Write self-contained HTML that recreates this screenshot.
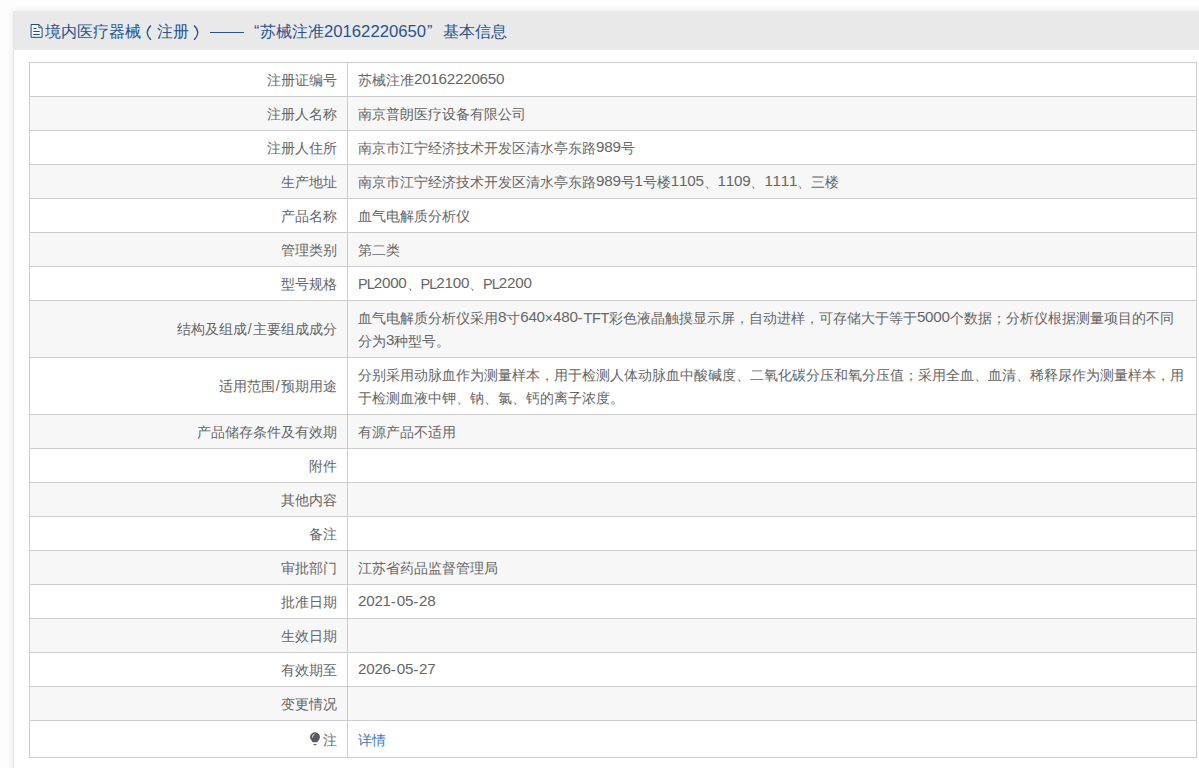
<!DOCTYPE html>
<html><head><meta charset="utf-8">
<style>
html,body{margin:0;padding:0;}
body{width:1199px;height:768px;overflow:hidden;position:relative;background:#fdfdfd;font-family:"Liberation Sans",sans-serif;}
.bgtop{display:none;}
.panel{position:absolute;left:13px;top:11px;width:1250px;height:820px;background:#fff;border-left:1px solid #e6e6e6;box-shadow:0 0 7px rgba(0,0,0,0.09);}
.hd{position:absolute;left:0;top:0;right:0;height:39px;background:#e9e9e9;color:#28548e;font-size:16px;line-height:39px;white-space:nowrap;}
.hd .ic{position:absolute;left:16px;top:12px;}
.hs{position:absolute;top:1px;}
.hn{font-size:16.7px;}
.pu{display:inline-block;width:16px;text-align:center;}
.q{font-size:16px;}
.dash{position:absolute;left:196px;top:21px;width:34px;height:1px;background:#28548e;}
.tb{position:absolute;left:15px;top:51px;width:1167px;border-top:1px solid #cdcdcd;border-left:1px solid #cdcdcd;}
.r{position:relative;height:33px;border-bottom:1px solid #cdcdcd;background:#fff;}
.r.g{background:#f7f7f7;}
.r.h2{height:56px;}
.r.h3{height:36px;}
.c1{position:absolute;left:0;top:0;bottom:0;width:317px;border-right:1px solid #cdcdcd;}
.c2{position:absolute;left:318px;top:0;bottom:0;width:848px;border-right:1px solid #cdcdcd;}
.t1{position:absolute;right:10px;top:6px;font-size:14px;line-height:23px;color:#666;white-space:nowrap;text-align:right;}
.t2{position:absolute;left:10px;top:6px;font-size:14px;line-height:23px;color:#666;white-space:nowrap;}
.n{font-size:15.2px;letter-spacing:-0.25px;font-kerning:none;line-height:0;position:relative;top:-1px;}
.L{font-kerning:none;font-size:14.5px;line-height:0;letter-spacing:-0.4px;position:relative;top:-0.5px;}
.PL{letter-spacing:-1px;}
.hy{font-size:14.75px;letter-spacing:1px;line-height:0;}
.x{}
.sl{display:inline-block;width:6.5px;text-align:center;}
.r.h2 .t1{top:17px;}
.r.h3 .t1{top:8px;}
.r.h3 .t2{top:8px;}
.bulb{vertical-align:-1px;margin-right:3px;}
a{color:#3b78c9;text-decoration:none;}
</style></head><body>
<div class="bgtop"></div><div class="panel"><div class="hd"><svg class="ic" width="14" height="16" viewBox="0 0 14 16"><path d="M1.1 1.5H8.9L12.1 4.7V14.3H1.1Z" stroke="#2a4878" stroke-width="1" fill="#f2f5fa"/><path d="M8.9 1.5V4.7H12.1" fill="none" stroke="#2a4878" stroke-width="0.9"/><path d="M3.6 5.5H6.4M3.3 8.5H9.7M3.3 11.5H9.7" stroke="#2a4878" stroke-width="1"/></svg><span class="hs" style="left:31px">境内医疗器械</span><span class="hs" style="left:0px"><svg style="position:absolute;left:131px;top:10px" width="8" height="18" viewBox="0 0 8 18"><path d="M6 3.5Q2.2 7 2.2 10.8Q2.2 14.6 6 18" fill="none" stroke="#28548e" stroke-width="1.3"/></svg></span><span class="hs" style="left:143px">注册</span><span class="hs" style="left:0px"><svg style="position:absolute;left:178px;top:10px" width="8" height="18" viewBox="0 0 8 18"><path d="M2 3.5Q5.8 7 5.8 10.8Q5.8 14.6 2 18" fill="none" stroke="#28548e" stroke-width="1.3"/></svg></span><span class="hs" style="left:246px">苏械注准<span class="hn">20162220650</span><span class="pu" style="text-align:left;text-indent:1px;width:17px">”</span>基本信息</span><div class="dash"></div><span class="hs q" style="left:240px">“</span></div>
<div class="tb">
<div class="r"><div class="c1"><span class="t1">注册证编号</span></div><div class="c2"><span class="t2">苏械注准<span class="n">20162220650</span></span></div></div>
<div class="r g"><div class="c1"><span class="t1">注册人名称</span></div><div class="c2"><span class="t2">南京普朗医疗设备有限公司</span></div></div>
<div class="r"><div class="c1"><span class="t1">注册人住所</span></div><div class="c2"><span class="t2">南京市江宁经济技术开发区清水亭东路<span class="n">989</span>号</span></div></div>
<div class="r g"><div class="c1"><span class="t1">生产地址</span></div><div class="c2"><span class="t2">南京市江宁经济技术开发区清水亭东路<span class="n">989</span>号<span class="n">1</span>号楼<span class="n">1105</span>、<span class="n">1109</span>、<span class="n">1111</span>、三楼</span></div></div>
<div class="r"><div class="c1"><span class="t1">产品名称</span></div><div class="c2"><span class="t2">血气电解质分析仪</span></div></div>
<div class="r g"><div class="c1"><span class="t1">管理类别</span></div><div class="c2"><span class="t2">第二类</span></div></div>
<div class="r"><div class="c1"><span class="t1">型号规格</span></div><div class="c2"><span class="t2"><span class="L PL">PL</span><span class="n">2000</span>、<span class="L PL">PL</span><span class="n">2100</span>、<span class="L PL">PL</span><span class="n">2200</span></span></div></div>
<div class="r g h2"><div class="c1"><span class="t1">结构及组成<span class="sl">/</span>主要组成成分</span></div><div class="c2"><span class="t2">血气电解质分析仪采用<span class="n">8</span>寸<span class="n">640</span><span class="x">×</span><span class="n">480</span><span class="hy">-</span><span class="L">TFT</span>彩色液晶触摸显示屏，自动进样，可存储大于等于<span class="n">5000</span>个数据；分析仪根据测量项目的不同<br>分为<span class="n">3</span>种型号。</span></div></div>
<div class="r h2"><div class="c1"><span class="t1">适用范围<span class="sl">/</span>预期用途</span></div><div class="c2"><span class="t2">分别采用动脉血作为测量样本，用于检测人体动脉血中酸碱度、二氧化碳分压和氧分压值；采用全血、血清、稀释尿作为测量样本，用<br>于检测血液中钾、钠、氯、钙的离子浓度。</span></div></div>
<div class="r g"><div class="c1"><span class="t1">产品储存条件及有效期</span></div><div class="c2"><span class="t2">有源产品不适用</span></div></div>
<div class="r"><div class="c1"><span class="t1">附件</span></div><div class="c2"></div></div>
<div class="r g"><div class="c1"><span class="t1">其他内容</span></div><div class="c2"></div></div>
<div class="r"><div class="c1"><span class="t1">备注</span></div><div class="c2"></div></div>
<div class="r g"><div class="c1"><span class="t1">审批部门</span></div><div class="c2"><span class="t2">江苏省药品监督管理局</span></div></div>
<div class="r"><div class="c1"><span class="t1">批准日期</span></div><div class="c2"><span class="t2"><span class="n">2021</span><span class="hy">-</span><span class="n">05</span><span class="hy">-</span><span class="n">28</span></span></div></div>
<div class="r g"><div class="c1"><span class="t1">生效日期</span></div><div class="c2"></div></div>
<div class="r"><div class="c1"><span class="t1">有效期至</span></div><div class="c2"><span class="t2"><span class="n">2026</span><span class="hy">-</span><span class="n">05</span><span class="hy">-</span><span class="n">27</span></span></div></div>
<div class="r g"><div class="c1"><span class="t1">变更情况</span></div><div class="c2"></div></div>
<div class="r h3"><div class="c1"><span class="t1"><svg class="bulb" width="10" height="14" viewBox="0 0 10 14"><path d="M5 0.2A4.9 4.9 0 0 1 9.6 6.8L7.3 10.3H2.7L0.4 6.8A4.9 4.9 0 0 1 5 0.2Z" fill="#575a60"/><path d="M2.3 5.6Q2.4 3.1 4.4 2.2" fill="none" stroke="#d8d8d8" stroke-width="1.1"/><rect x="3.4" y="11.9" width="3.2" height="1.3" rx="0.6" fill="#666"/></svg>注</span></div><div class="c2"><span class="t2"><a>详情</a></span></div></div>
</div></div>
</body></html>
